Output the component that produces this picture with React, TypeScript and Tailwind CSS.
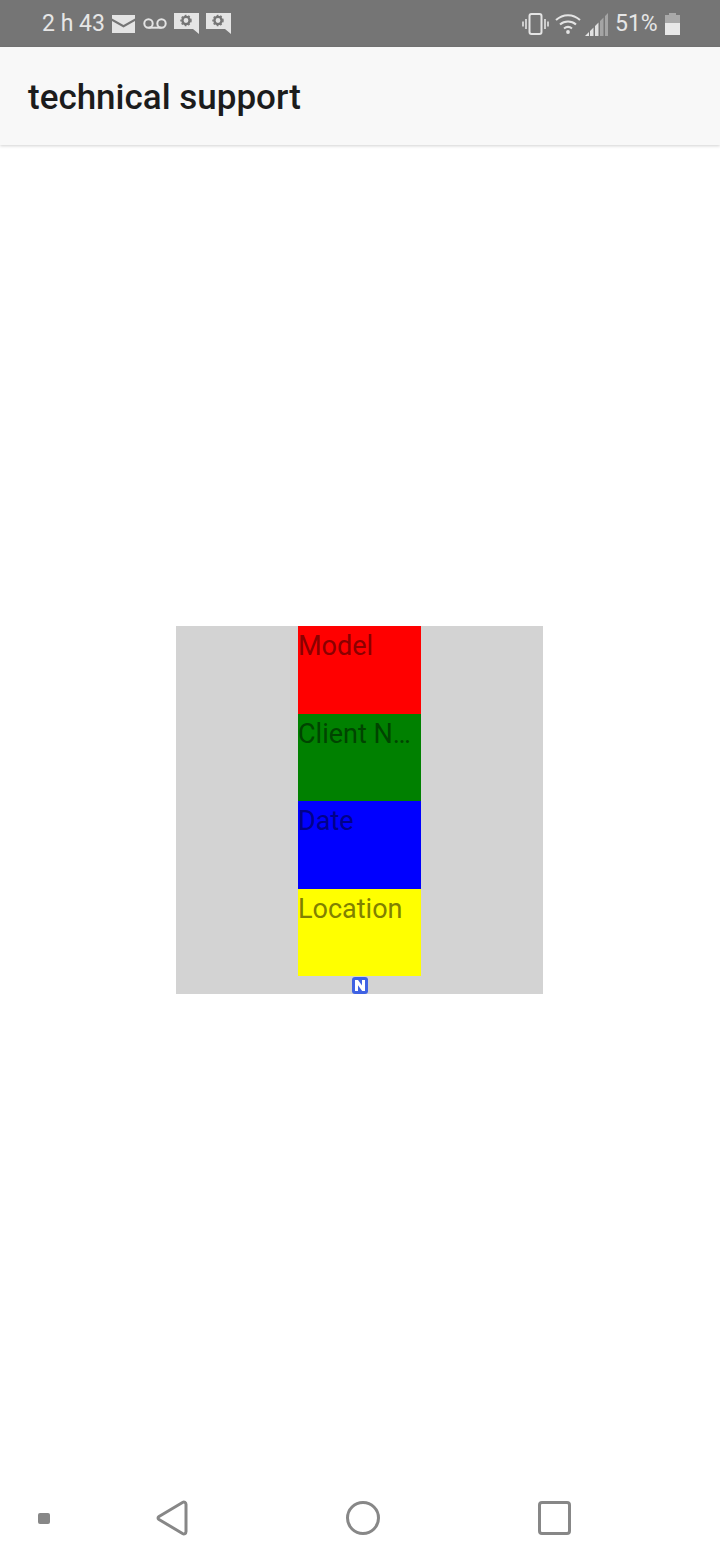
const rows = [
  { label: "Model", bg: "bg-[#ff0000]", text: "text-[#8a0000]", h: "h-[88px]" },
  { label: "Client Name", bg: "bg-[#008000]", text: "text-[#004400]", h: "h-[87px]" },
  { label: "Date", bg: "bg-[#0000ff]", text: "text-[#00008a]", h: "h-[88px]" },
  { label: "Location", bg: "bg-[#ffff00]", text: "text-[#808000]", h: "h-[87px]" },
];

function ChatGear() {
  return (
    <svg width="26" height="22" viewBox="0 0 26 22">
      <path d="M0 1h25v21l-6-5H0z" fill="#e4e4e4" />
      <circle cx="12" cy="8.5" r="3.6" fill="none" stroke="#757575" strokeWidth="2.4" />
      <circle cx="12" cy="8.5" r="5" fill="none" stroke="#757575" strokeWidth="1.4" strokeDasharray="1.8 1.8" />
    </svg>
  );
}

function StatusBar() {
  return (
    <div className="h-[47px] bg-[#757575] flex items-center pl-[42px] pr-[40px] text-[#e6e6e6] text-[23px] font-['Roboto',sans-serif]">
      <span className="w-[62px] leading-none whitespace-nowrap">2 h 43</span>
      {/* mail */}
      <svg className="ml-[8px]" width="23" height="18" viewBox="0 0 23 18">
        <path d="M0 0h23v3.5L11.500 10 0 3.500zM0 6l11.500 6.500L23 6v12H0z" fill="#e4e4e4" />
      </svg>
      {/* voicemail */}
      <svg className="ml-[8px]" width="24" height="11" viewBox="0 0 24 11">
        <circle cx="5.500" cy="5.500" r="4.200" fill="none" stroke="#e4e4e4" strokeWidth="2" />
        <circle cx="18.500" cy="5.500" r="4.200" fill="none" stroke="#e4e4e4" strokeWidth="2" />
        <path d="M5.500 9.700h13" stroke="#e4e4e4" strokeWidth="2" />
      </svg>
      <div className="ml-[7px] mb-[1px] flex gap-[6px]">
        <ChatGear />
        <ChatGear />
      </div>
      <div className="ml-auto flex items-center">
        {/* vibrate */}
        <svg width="27" height="22" viewBox="0 0 27 22">
          <rect x="7.500" y="1" width="12" height="20" rx="2" fill="none" stroke="#e4e4e4" strokeWidth="2" />
          <path d="M4 6v10M1 8.500v5M23 6v10M26 8.500v5" stroke="#e4e4e4" strokeWidth="1.600" />
        </svg>
        {/* wifi */}
        <svg className="ml-[6px]" width="26" height="21" viewBox="0 0 26 21">
          <path d="M1 7c7-6.500 17-6.500 24 0M5 11.500c4.500-4 11.500-4 16 0M9 15.500c2.500-2 5.500-2 8 0" fill="none" stroke="#e4e4e4" strokeWidth="2" />
          <circle cx="13" cy="19" r="1.900" fill="#e4e4e4" />
        </svg>
        {/* signal */}
        <svg className="ml-[4px] mt-[2px]" width="23" height="23" viewBox="0 0 23 23">
          <path d="M0 23l4-4v4z" fill="#e4e4e4" />
          <path d="M5 18l3.500-3.500V23H5zM10 13l3.500-3.500V23H10z" fill="#e0e0e0" />
          <path d="M15 8l3.500-3.500V23H15zM20 3l3-3v23h-3z" fill="#a4a4a4" />
        </svg>
        <span className="ml-[7px] w-[50px] leading-none whitespace-nowrap">51%</span>
        {/* battery */}
        <svg width="15" height="22" viewBox="0 0 15 22">
          <path d="M4 0h7v2h4v8H0V2h4z" fill="#a9a9a9" />
          <path d="M0 10h15v12H0z" fill="#e8e8e8" />
        </svg>
      </div>
    </div>
  );
}

function NavBar() {
  return (
    <div className="h-[87px] flex items-center pl-[38px] pt-[3px]">
      <div className="w-[12px] h-[11px] rounded-[2px] bg-[#878787]" />
      <svg className="ml-[106px]" width="32" height="36" viewBox="0 0 32 36">
        <path d="M26.500 2.500 3 16.500c-1.300 1-1.300 2 0 3l23.500 14c1.800 1 3.500 0 3.500-2V4.500c0-2-1.700-3-3.500-2z" fill="none" stroke="#878787" strokeWidth="3" strokeLinejoin="round" />
      </svg>
      <div className="ml-[158px] w-[34px] h-[34px] rounded-full border-[3px] border-[#878787]" />
      <div className="ml-[158px] w-[33px] h-[34px] rounded-[4px] border-[3px] border-[#878787]" />
    </div>
  );
}

export default function App() {
  return (
    <div className="w-[720px] h-[1560px] bg-white flex flex-col font-['Roboto',sans-serif]">
      <StatusBar />
      {/* Header */}
      <div className="h-[98px] bg-[#f8f8f8] flex items-center pl-[28px] pt-[2px] shadow-[0_1px_3px_rgba(0,0,0,0.18)] relative">
        <h1 className="text-[35px] font-medium text-[#1c1c1c] leading-none">technical support</h1>
      </div>
      {/* Content */}
      <div className="flex-1 flex items-center justify-center pr-[1px] pt-[2px]">
        <div className="w-[367px] h-[368px] bg-[#d3d3d3] flex flex-col items-center">
          <div className="w-[123px]">
            {rows.map((row) => (
              <div key={row.label} className={`${row.h} ${row.bg}`}>
                <p className={`${row.text} text-[27px] leading-[41px] truncate`}>{row.label}</p>
              </div>
            ))}
          </div>
          {/* Logo */}
          <svg className="mt-[1px]" width="16" height="17" viewBox="0 0 16 17">
            <rect width="16" height="17" rx="3" fill="#3f62e3" />
            <path d="M3 3h3l4 5.500V3h3v11h-2.800L6 8.300V14H3z" fill="#ffffff" />
          </svg>
        </div>
      </div>
      <NavBar />
    </div>
  );
}
